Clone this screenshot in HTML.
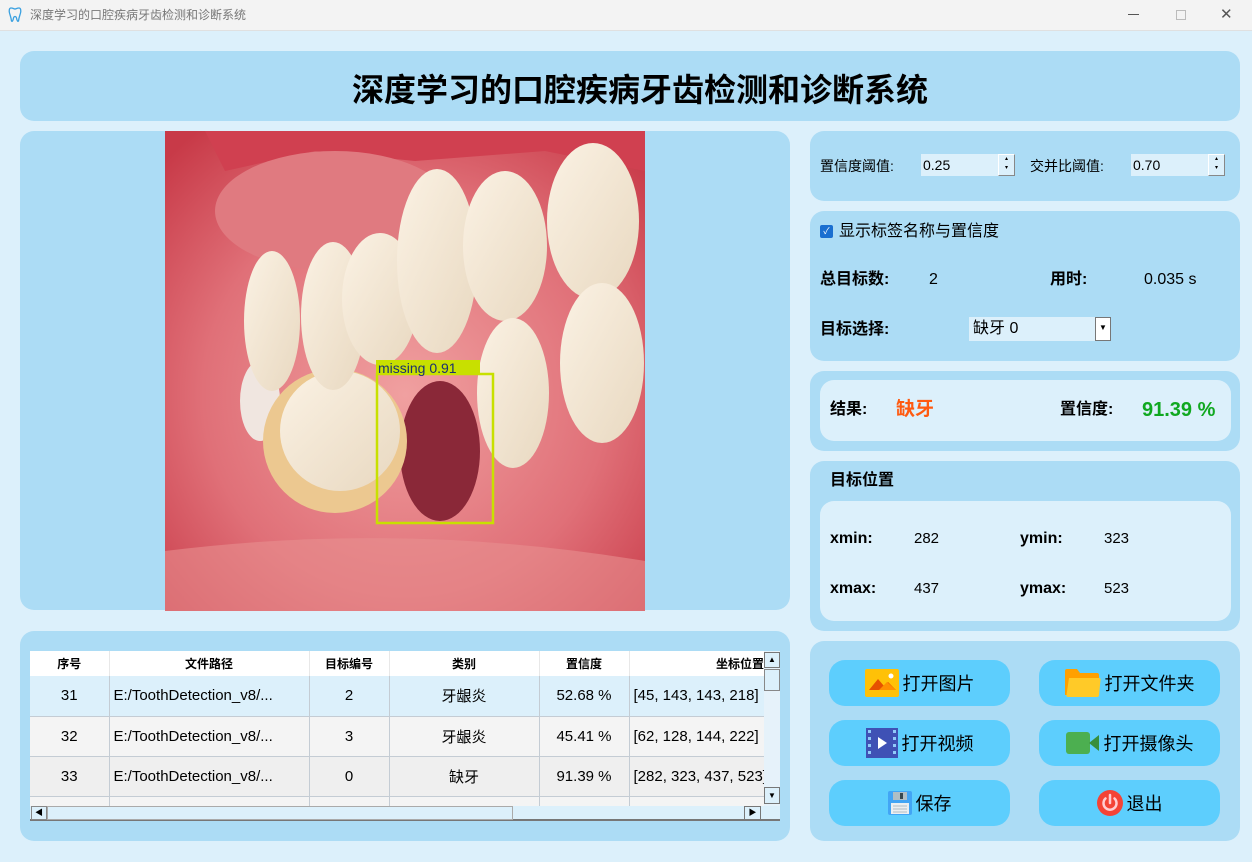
<!DOCTYPE html>
<html><head><meta charset="utf-8"><style>
*{margin:0;padding:0;box-sizing:border-box}
body{width:1252px;height:862px;background:#dcf0fb;font-family:"Liberation Sans","Noto Sans CJK SC",sans-serif;position:relative;overflow:hidden;color:#000}
.a{position:absolute;line-height:22px}
.p{position:absolute;background:#acdcf5;border-radius:14px}
.in{position:absolute;background:#dcf0fb;border-radius:14px}
.b{font-weight:bold}
.btn{position:absolute;background:#5dcefd;border-radius:16px;width:181px;height:46px;font-size:18px;display:flex;align-items:center;justify-content:center;gap:4px}
td,th{border-right:1px solid #c4ccd4;border-bottom:1px solid #c4ccd4;text-align:center;font-size:15px;padding:0}
th{font-size:12px;background:#fff;height:25px;border-right:1px solid #e8e8e8;border-bottom:none}
.spin{position:absolute;width:17px;height:22px;background:#dcf0fb;border:1px solid #888;border-top-color:#fff;border-left-color:#fff;font-size:6px;text-align:center;line-height:9px}
</style></head><body>
<div class="a" style="left:0;top:0;width:1252px;height:31px;background:#f3f3f3;border-bottom:1px solid #e0e0e0"></div>
<svg class="a" style="left:8px;top:7px" width="14" height="16" viewBox="0 0 14 16"><path d="M3 1C1 1 1 4 1.5 6 2 8 3 10 3.5 14 4 15 5 14 5.5 11 6 9 8 9 8.5 11 9 14 10 15 10.5 14 11 10 12 8 12.5 6 13 4 13 1 11 1 9 1 8 2 7 2 6 2 5 1 3 1Z" fill="none" stroke="#3aa0e0" stroke-width="1.3"/></svg>
<div class="a" style="left:30px;top:4px;font-size:12px;color:#777">深度学习的口腔疾病牙齿检测和诊断系统</div>
<div class="a" style="left:1128px;top:14px;width:11px;height:1px;background:#555"></div>
<div class="a" style="left:1176px;top:10px;width:10px;height:10px;border:1px solid #bbb"></div>
<div class="a" style="left:1220px;top:4px;font-size:15px;color:#555">✕</div>

<div class="p" style="left:20px;top:51px;width:1220px;height:70px"></div>
<div class="a b" style="left:20px;top:70px;width:1240px;text-align:center;font-size:32px;line-height:40px">深度学习的口腔疾病牙齿检测和诊断系统</div>

<div class="p" style="left:20px;top:131px;width:770px;height:479px"></div>
<svg class="a" style="left:165px;top:131px" width="480" height="480" viewBox="0 0 480 480">
<defs><radialGradient id="g" cx="50%" cy="55%" r="70%"><stop offset="0" stop-color="#f0a0a0"/><stop offset="0.6" stop-color="#e07078"/><stop offset="1" stop-color="#c83a48"/></radialGradient>
<linearGradient id="t" x1="0" y1="0" x2="1" y2="1"><stop offset="0" stop-color="#fbf2e4"/><stop offset="1" stop-color="#e8d8c0"/></linearGradient></defs>
<rect width="480" height="480" fill="url(#g)"/>
<path d="M40 0H480V40L380 20 250 30 150 20 60 40Z" fill="#d04050"/>
<ellipse cx="170" cy="80" rx="120" ry="60" fill="#e07a80"/>
<ellipse cx="95" cy="270" rx="20" ry="40" fill="#f0e6e0"/>
<ellipse cx="275" cy="320" rx="40" ry="70" fill="#8a2838"/>
<ellipse cx="170" cy="310" rx="72" ry="72" fill="#ecc890"/>
<ellipse cx="175" cy="300" rx="60" ry="60" fill="url(#t)"/>
<ellipse cx="107" cy="190" rx="28" ry="70" fill="url(#t)"/>
<ellipse cx="168" cy="185" rx="32" ry="74" fill="url(#t)"/>
<ellipse cx="215" cy="168" rx="38" ry="66" fill="url(#t)"/>
<ellipse cx="272" cy="130" rx="40" ry="92" fill="url(#t)"/>
<ellipse cx="340" cy="115" rx="42" ry="75" fill="url(#t)"/>
<ellipse cx="428" cy="90" rx="46" ry="78" fill="url(#t)"/>
<ellipse cx="348" cy="262" rx="36" ry="75" fill="url(#t)"/>
<ellipse cx="437" cy="232" rx="42" ry="80" fill="url(#t)"/>
<path d="M0 420Q240 390 480 430V480H0Z" fill="#e89090" opacity=".6"/>
<rect x="212" y="243" width="116" height="149" fill="none" stroke="#c8e000" stroke-width="2.5"/>
<rect x="211" y="229" width="104" height="15" fill="#c8e000"/>
<text x="213" y="242" font-size="14" font-family="Liberation Sans" fill="#1a3070">missing  0.91</text>
</svg>

<div class="p" style="left:20px;top:631px;width:770px;height:210px"></div>
<div class="a" style="left:30px;top:651px;width:750px;height:170px;background:#f4f4f4;overflow:hidden;line-height:normal">
<table style="border-collapse:collapse;width:734px;table-layout:fixed">
<colgroup><col style="width:79px"><col style="width:200px"><col style="width:80px"><col style="width:150px"><col style="width:90px"><col style="width:135px"></colgroup>
<tr><th>序号</th><th>文件路径</th><th>目标编号</th><th>类别</th><th>置信度</th><th style="text-align:right;border-right:none">坐标位置</th></tr>
<tr style="height:40px;background:#dcf0fb"><td>31</td><td style="text-align:left;padding-left:4px">E:/ToothDetection_v8/...</td><td>2</td><td>牙龈炎</td><td>52.68 %</td><td style="text-align:left;padding-left:4px;white-space:nowrap;overflow:hidden">[45, 143, 143, 218]</td></tr>
<tr style="height:40px;background:#f4f4f4"><td>32</td><td style="text-align:left;padding-left:4px">E:/ToothDetection_v8/...</td><td>3</td><td>牙龈炎</td><td>45.41 %</td><td style="text-align:left;padding-left:4px;white-space:nowrap;overflow:hidden">[62, 128, 144, 222]</td></tr>
<tr style="height:40px;background:#efefef"><td>33</td><td style="text-align:left;padding-left:4px">E:/ToothDetection_v8/...</td><td>0</td><td>缺牙</td><td>91.39 %</td><td style="text-align:left;padding-left:4px;white-space:nowrap;overflow:hidden">[282, 323, 437, 523]</td></tr>
<tr style="height:40px;background:#f4f4f4"><td></td><td></td><td></td><td></td><td></td><td></td></tr>
</table>
<div class="a" style="left:734px;top:0;width:16px;height:155px;background:#e6f2fa"></div>
<div class="a" style="left:734px;top:1px;width:16px;height:16px;background:#dcf0fb;border:1px solid #777;font-size:8px;text-align:center;line-height:14px">▲</div>
<div class="a" style="left:734px;top:18px;width:16px;height:22px;background:#dcf0fb;border:1px solid #888"></div>
<div class="a" style="left:734px;top:136px;width:16px;height:17px;background:#dcf0fb;border:1px solid #777;font-size:8px;text-align:center;line-height:15px">▼</div>
<div class="a" style="left:0;top:155px;width:750px;height:15px;background:#dcf0fb;border-bottom:2px solid #777"></div>
<div class="a" style="left:1px;top:155px;width:16px;height:14px;border:1px solid #888;font-size:8px;text-align:center;line-height:12px">◀</div>
<div class="a" style="left:17px;top:155px;width:466px;height:14px;border:1px solid #aaa"></div>
<div class="a" style="left:714px;top:155px;width:17px;height:14px;border:1px solid #777;font-size:8px;text-align:center;line-height:12px">▶</div>
</div>

<div class="p" style="left:810px;top:131px;width:430px;height:70px"></div>
<div class="a" style="left:820px;top:155px;font-size:14px">置信度阈值:</div>
<div class="a" style="left:921px;top:154px;width:85px;height:22px;background:#dcf0fb;font-size:14px;padding:0 2px">0.25</div>
<div class="spin" style="left:998px;top:154px">▴<br>▾</div>
<div class="a" style="left:1030px;top:155px;font-size:14px">交并比阈值:</div>
<div class="a" style="left:1131px;top:154px;width:85px;height:22px;background:#dcf0fb;font-size:14px;padding:0 2px">0.70</div>
<div class="spin" style="left:1208px;top:154px">▴<br>▾</div>

<div class="p" style="left:810px;top:211px;width:430px;height:150px"></div>
<div class="a" style="left:820px;top:225px;width:13px;height:13px;background:#1a6fd0;border-radius:2px;color:#fff;font-size:9px;text-align:center;line-height:13px">✓</div>
<div class="a" style="left:839px;top:221px;font-size:16px">显示标签名称与置信度</div>
<div class="a b" style="left:820px;top:269px;font-size:16px">总目标数:</div>
<div class="a" style="left:929px;top:269px;font-size:16px">2</div>
<div class="a b" style="left:1050px;top:269px;font-size:16px">用时:</div>
<div class="a" style="left:1144px;top:269px;font-size:16px">0.035 s</div>
<div class="a b" style="left:820px;top:319px;font-size:16px">目标选择:</div>
<div class="a" style="left:969px;top:317px;width:142px;height:24px;background:#dcf0fb;font-size:16px;padding:1px 4px">缺牙 0</div>
<div class="a" style="left:1095px;top:317px;width:16px;height:24px;background:#fff;border:1px solid #777;font-size:8px;text-align:center;line-height:20px">▼</div>

<div class="p" style="left:810px;top:371px;width:430px;height:80px"></div>
<div class="in" style="left:820px;top:380px;width:411px;height:61px"></div>
<div class="a b" style="left:830px;top:399px;font-size:16px">结果:</div>
<div class="a b" style="left:896px;top:399px;font-size:19px">
<span style="color:#ff5a10">缺牙</span></div>
<div class="a b" style="left:1060px;top:399px;font-size:16px">置信度:</div>
<div class="a b" style="left:1142px;top:399px;font-size:20px;color:#10a820">91.39 %</div>

<div class="p" style="left:810px;top:461px;width:430px;height:170px"></div>
<div class="a b" style="left:830px;top:470px;font-size:16px">目标位置</div>
<div class="in" style="left:820px;top:501px;width:411px;height:120px"></div>
<div class="a b" style="left:830px;top:528px;font-size:16px">xmin:</div>
<div class="a" style="left:914px;top:528px;font-size:15px">282</div>
<div class="a b" style="left:1020px;top:528px;font-size:16px">ymin:</div>
<div class="a" style="left:1104px;top:528px;font-size:15px">323</div>
<div class="a b" style="left:830px;top:578px;font-size:16px">xmax:</div>
<div class="a" style="left:914px;top:578px;font-size:15px">437</div>
<div class="a b" style="left:1020px;top:578px;font-size:16px">ymax:</div>
<div class="a" style="left:1104px;top:578px;font-size:15px">523</div>

<div class="p" style="left:810px;top:641px;width:430px;height:200px"></div>
<div class="btn" style="left:829px;top:660px"><svg width="34" height="28" viewBox="0 0 34 28"><rect width="34" height="28" rx="2" fill="#ffc107"/><path d="M4 21L13 10 19 17 23 13 31 21Z" fill="#e65100"/><path d="M14 21L22 13 31 21Z" fill="#ff8f00"/><circle cx="26" cy="7" r="2.5" fill="#fff"/></svg>打开图片</div>
<div class="btn" style="left:1039px;top:660px"><svg width="36" height="28" viewBox="0 0 36 28"><path d="M0 2Q0 0 2 0H12L15 4H32Q34 4 34 6V26H0Z" fill="#ffa000"/><path d="M4 9H34Q36 9 35.5 11L34 26Q34 28 32 28H3Q1 28 1.5 26Z" fill="#ffca28"/></svg>打开文件夹</div>
<div class="btn" style="left:829px;top:720px"><svg width="32" height="30" viewBox="0 0 32 30"><rect width="32" height="30" fill="#3f51b5"/><g fill="#90caf9"><rect x="2" y="2" width="3" height="3"/><rect x="2" y="9" width="3" height="3"/><rect x="2" y="16" width="3" height="3"/><rect x="2" y="23" width="3" height="3"/><rect x="27" y="2" width="3" height="3"/><rect x="27" y="9" width="3" height="3"/><rect x="27" y="16" width="3" height="3"/><rect x="27" y="23" width="3" height="3"/></g><path d="M12 9L21 15 12 21Z" fill="#fff"/></svg>打开视频</div>
<div class="btn" style="left:1039px;top:720px"><svg width="34" height="22" viewBox="0 0 34 22"><rect width="24" height="22" rx="3" fill="#4caf50"/><path d="M23 11L33 3V19Z" fill="#388e3c"/></svg>打开摄像头</div>
<div class="btn" style="left:829px;top:780px"><svg width="24" height="24" viewBox="0 0 24 24"><rect width="24" height="24" rx="2" fill="#42a5f5"/><rect x="5" y="1" width="14" height="8" fill="#b0bec5"/><rect x="12" y="2" width="3" height="6" fill="#37474f"/><rect x="3" y="12" width="18" height="11" fill="#eceff1"/><path d="M5 15H19M5 18H19M5 21H19" stroke="#b0bec5"/></svg>保存</div>
<div class="btn" style="left:1039px;top:780px"><svg width="26" height="26" viewBox="0 0 26 26"><circle cx="13" cy="13" r="13" fill="#f44336"/><path d="M8.5 8.5A6.5 6.5 0 1 0 17.5 8.5" fill="none" stroke="#ffcdd2" stroke-width="2.5" stroke-linecap="round"/><path d="M13 5V13" stroke="#ffcdd2" stroke-width="2.5" stroke-linecap="round"/></svg>退出</div>
</body></html>
